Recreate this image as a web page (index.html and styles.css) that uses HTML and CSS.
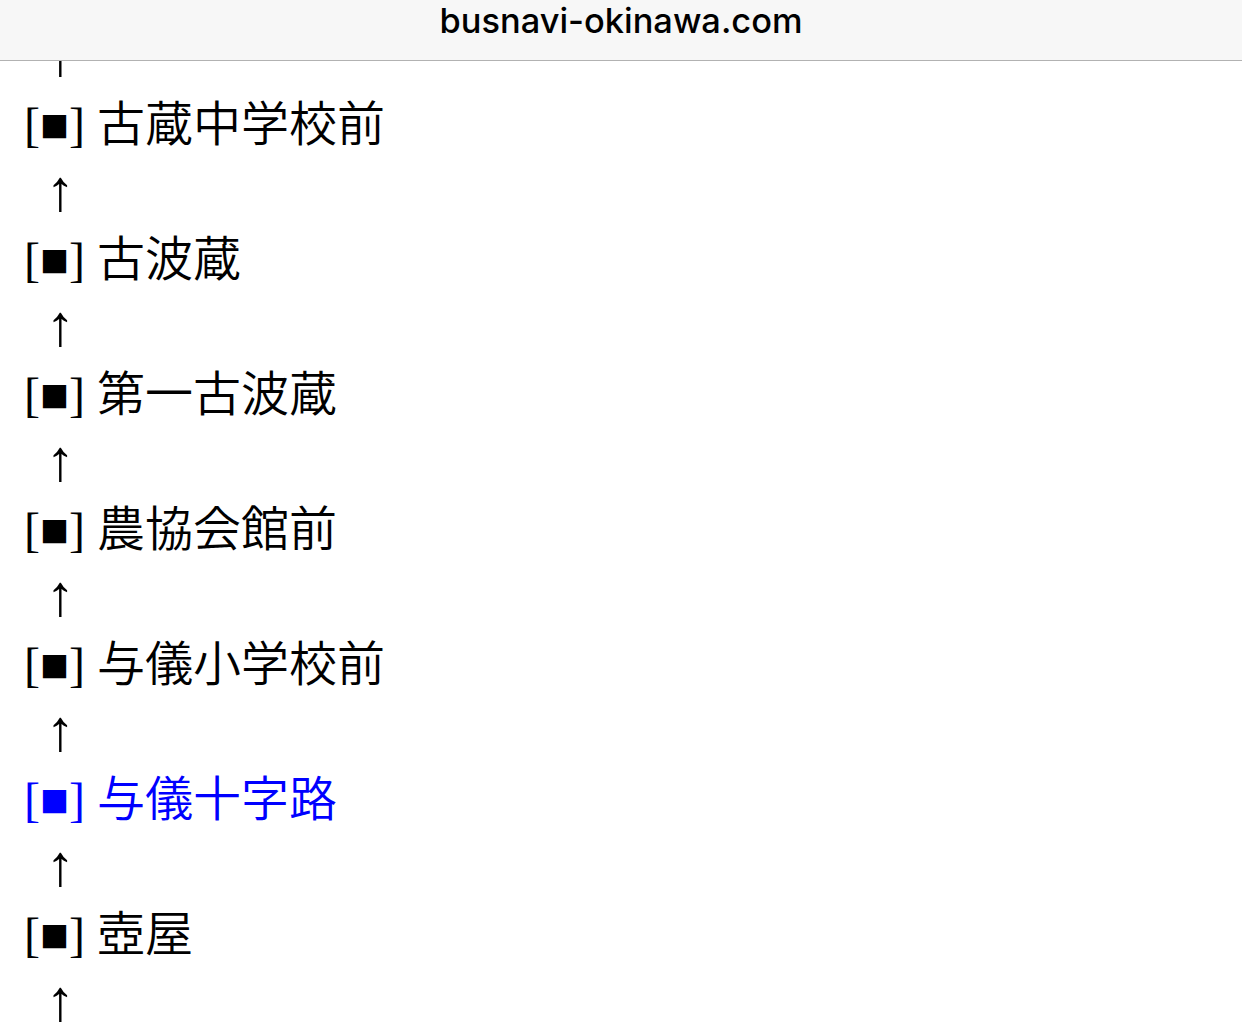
FILE: index.html
```html
<!DOCTYPE html>
<html lang="ja">
<head>
    <meta charset="UTF-8">
    <meta name="viewport" content="width=device-width, initial-scale=1.0">
    <title>busnavi-okinawa.com</title>
    <link rel="stylesheet" href="styles.css">
</head>
<body>
    <div class="address-bar">
        <div class="domain">busnavi-okinawa.com</div>
    </div>

    <div class="route">
        <div class="arrow arrow-first">↑</div>
        <div class="stop">[■] <span class="stop-name">古蔵中学校前</span></div>
        <div class="arrow">↑</div>
        <div class="stop">[■] <span class="stop-name">古波蔵</span></div>
        <div class="arrow">↑</div>
        <div class="stop">[■] <span class="stop-name">第一古波蔵</span></div>
        <div class="arrow">↑</div>
        <div class="stop">[■] <span class="stop-name">農協会館前</span></div>
        <div class="arrow">↑</div>
        <div class="stop">[■] <span class="stop-name">与儀小学校前</span></div>
        <div class="arrow">↑</div>
        <div class="stop stop-current">[■] <span class="stop-name">与儀十字路</span></div>
        <div class="arrow">↑</div>
        <div class="stop">[■] <span class="stop-name">壺屋</span></div>
        <div class="arrow">↑</div>
    </div>
</body>
</html>
```

FILE: styles.css
```css
* {
    margin: 0;
    padding: 0;
    box-sizing: border-box;
}
html, body {
    height: 100%;
}
body {
    background: #fff;
    color: #000;
    display: flex;
    flex-direction: column;
    overflow: hidden;
}
.address-bar {
    height: 61px;
    flex-shrink: 0;
    background: #f7f7f7;
    border-bottom: 1px solid #b2b2b2;
    display: flex;
    justify-content: center;
    padding-top: 1px;
}
.domain {
    font-family: 'Inter', 'Roboto', sans-serif;
    font-size: 34.4px;
    font-weight: 500;
    line-height: 40px;
    color: #000;
}
.route {
    flex: 1;
    overflow: hidden;
    padding-left: 24px;
    font-family: 'Liberation Serif', 'Noto Sans CJK JP', serif;
    font-size: 48px;
    line-height: 67.5px;
}
.stop,
.arrow {
    height: 67.5px;
    white-space: nowrap;
}
.stop-name {
    font-family: 'Noto Sans CJK JP', sans-serif;
    font-weight: 350;
    line-height: 1;
}
.stop-current {
    color: #0000ff;
}
.arrow {
    padding-left: 22px;
    font-size: 58px;
    line-height: 64px;
}
.arrow-first {
    margin-top: -37.5px;
}
```
